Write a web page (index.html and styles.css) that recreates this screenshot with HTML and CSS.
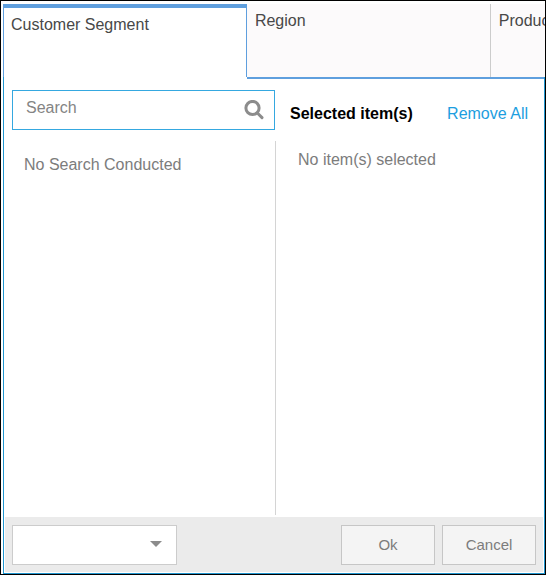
FILE: index.html
```html
<!DOCTYPE html>
<html lang="en">
<head>
<meta charset="utf-8">
<title>Customer Segment</title>
<link rel="stylesheet" href="styles.css">
</head>
<body>
<main class="dialog">
  <nav class="tabs">
    <button class="tab tab-active" type="button">Customer Segment</button>
    <button class="tab" type="button">Region</button>
    <button class="tab" type="button">Products</button>
  </nav>
  <div class="panel">
    <div class="columns">
      <section class="available">
        <label class="search">
          <input class="search-input" type="search" placeholder="Search" aria-label="Search">
          <svg class="search-icon" viewBox="0 0 20 20" aria-hidden="true">
            <circle cx="8.5" cy="8" r="6.6"/>
            <path d="M13.4 13l4.6 4.6"/>
          </svg>
        </label>
        <p class="results">No Search Conducted</p>
      </section>
      <section class="selected">
        <header class="selected-head">
          <h2 class="selected-title">Selected item(s)</h2>
          <a class="remove" href="#">Remove All</a>
        </header>
        <p class="selected-empty">No item(s) selected</p>
      </section>
    </div>
    <footer class="footer">
      <div class="picker">
        <select class="select" aria-label="Options"><option></option></select>
        <svg class="caret" viewBox="0 0 12 6" aria-hidden="true"><path d="M0 0h12l-6 6z"/></svg>
      </div>
      <div class="actions">
        <button class="button" type="button">Ok</button>
        <button class="button" type="button">Cancel</button>
      </div>
    </footer>
  </div>
</main>
</body>
</html>
```
FILE: styles.css
```css
* {
  box-sizing: border-box;
}

body {
  margin: 0;
  font: 16px/20px "Liberation Sans", Arial, sans-serif;
  color: #7c7c7c;
  background: #fff;
}

h2,
p {
  margin: 0;
}

button,
input,
select {
  font: inherit;
  color: inherit;
  border-radius: 0;
}

.dialog {
  display: flex;
  flex-direction: column;
  min-height: 100vh;
  padding: 3px 0 0 2px;
  border: 1px solid #000;
}

.tabs {
  display: flex;
  height: 73px;
  overflow: hidden;
  background: #fcfafb;
}

.tab {
  display: flex;
  flex: 0 0 45%;
  align-items: flex-start;
  padding: 7px 8px;
  border: 0;
  border-right: 1px solid #ccc;
  background: #fcfafb;
  color: #484848;
}

.tab-active {
  padding: 7px;
  border: 1px solid #5f9fde;
  border-top-width: 4px;
  border-bottom: 0;
  background: #fff;
}

.panel {
  display: flex;
  flex: 1;
  flex-direction: column;
  border: 1px solid #2196cf;
  border-top: 0;
}

.panel::before {
  content: "";
  height: 2px;
  margin-left: 45%;
  background: #5f9fde;
}

.columns {
  display: grid;
  flex: 1;
  grid-template-columns: 68fr 67fr;
  padding-top: 11px;
}

.available {
  display: flex;
  flex-direction: column;
  padding-left: 8px;
}

.search {
  display: flex;
  align-items: center;
  height: 40px;
  margin-right: 1px;
  padding: 0 10px 0 13px;
  border: 1px solid #35a8e0;
}

.search-input {
  flex: 1;
  min-width: 0;
  padding: 0 0 4px;
  border: 0;
  outline: 0;
  background: none;
  appearance: none;
}

.search-input::placeholder {
  color: #848484;
  opacity: 1;
}

.search-icon {
  width: 20px;
  height: 20px;
  fill: none;
  stroke: #8c8c8c;
  stroke-width: 3;
  stroke-linecap: round;
}

.results {
  flex: 1;
  margin: 11px 0 2px;
  padding: 14px 12px;
  border-right: 1px solid #d4d4d4;
}

.selected {
  padding: 14px 16px 0 14px;
}

.selected-head {
  display: flex;
  justify-content: space-between;
}

.selected-title {
  font-size: 16px;
  line-height: 20px;
  color: #000;
}

.remove {
  color: #1c9ee0;
  text-decoration: none;
}

.selected-empty {
  padding: 26px 8px;
}

.footer {
  display: flex;
  justify-content: space-between;
  margin: 0 1px 1px;
  padding: 8px 7px 7px;
  background: #ebebeb;
}

.picker {
  position: relative;
  width: 165px;
  height: 40px;
}

.select {
  width: 100%;
  height: 100%;
  padding: 0 12px;
  border: 1px solid #ccc;
  background: #fff;
  appearance: none;
}

.caret {
  position: absolute;
  top: 16px;
  right: 15px;
  width: 12px;
  height: 6px;
  fill: #8c8c8c;
  pointer-events: none;
}

.actions {
  display: flex;
  gap: 7px;
}

.button {
  width: 94px;
  height: 40px;
  padding: 0;
  border: 1px solid #c6c6c6;
  background: #f4f4f4;
  font-size: 15px;
}
```
